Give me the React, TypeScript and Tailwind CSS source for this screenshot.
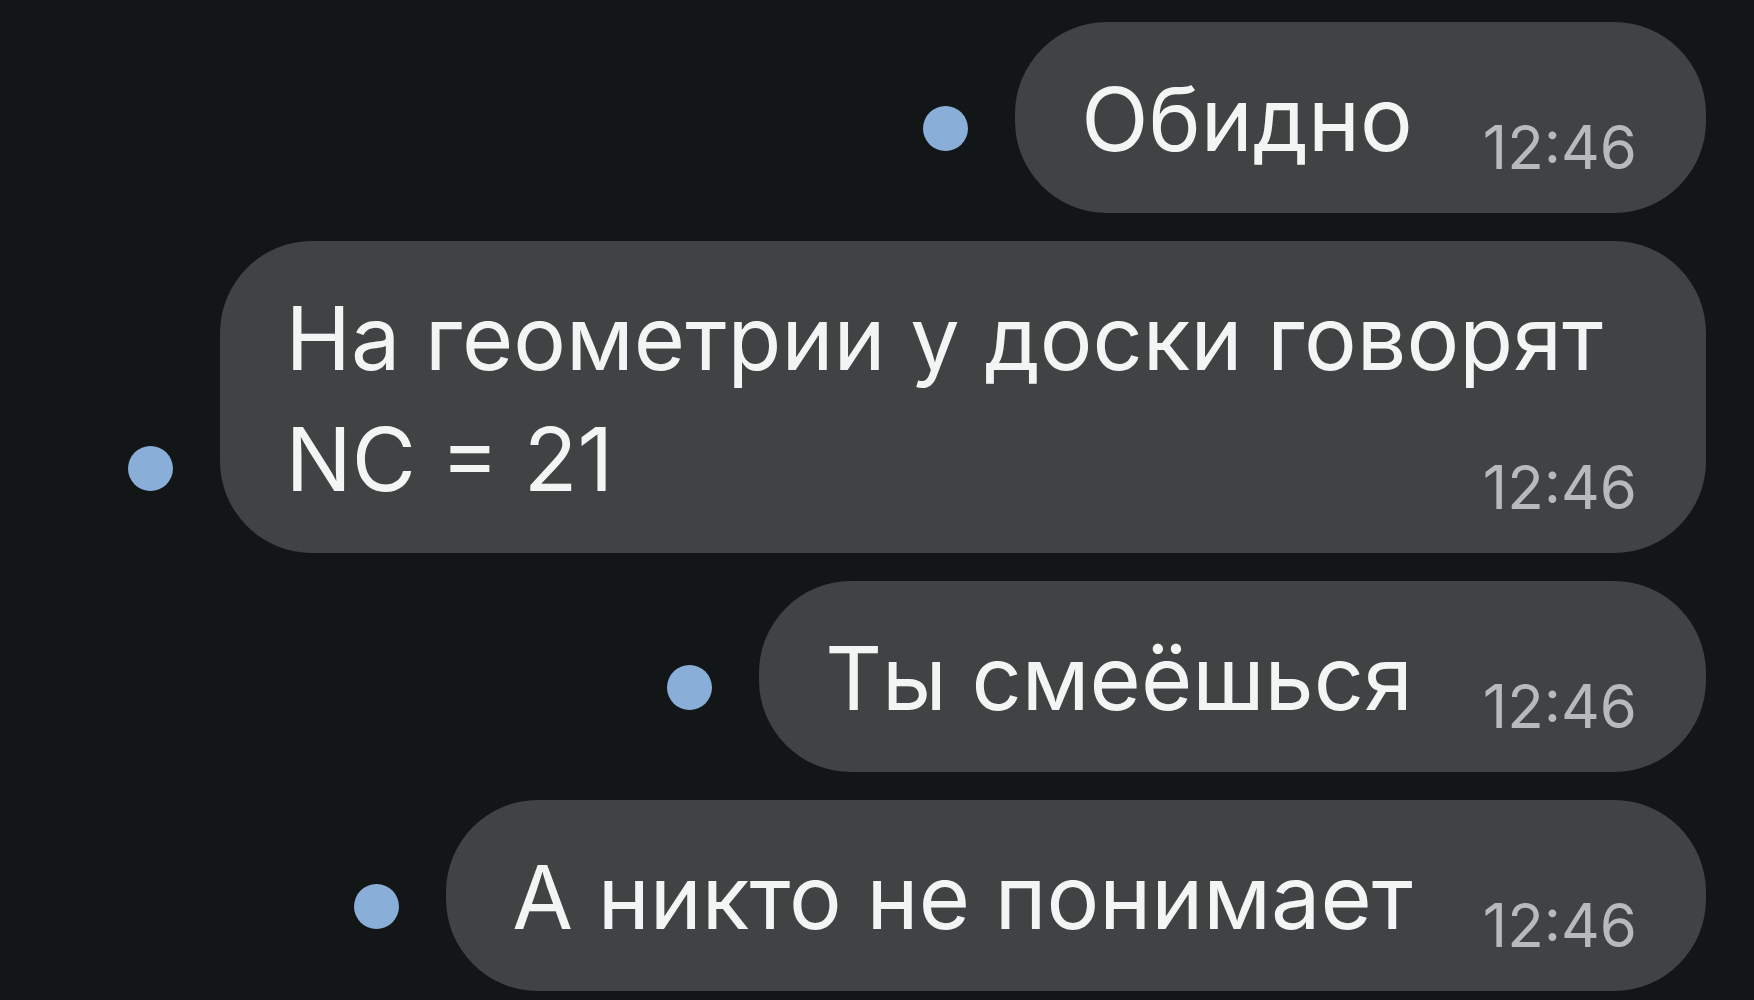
type Message = {
  lines: string[];
  time: string;
};

const messages: Message[] = [
  { lines: ['Обидно'], time: '12:46' },
  { lines: ['На геометрии у доски говорят', 'NC = 21'], time: '12:46' },
  { lines: ['Ты смеёшься'], time: '12:46' },
  { lines: ['А никто не понимает'], time: '12:46' },
];

const Bubble = ({ lines, time }: Message) => {
  const head = lines.slice(0, -1);
  const last = lines[lines.length - 1];

  return (
    <div className="flex items-end gap-[47px]">
      {/* unread marker */}
      <span className="mb-[62px] h-[45px] w-[45px] shrink-0 rounded-full bg-[#89afd9]" />
      <div className="rounded-[92px] bg-[#3f4343] pl-[66px] pr-[69px] pt-[37px] pb-[33px] text-[88px] leading-[121px] text-[#f3f4f4]">
        {head.map((line) => (
          <div key={line} className="whitespace-nowrap pr-[34px]">
            {line}
          </div>
        ))}
        <div className="flex items-end justify-between gap-[70px]">
          <span className="whitespace-nowrap">{last}</span>
          <span className="mb-[3px] text-[60px] leading-none text-[#b6baba]">{time}</span>
        </div>
      </div>
    </div>
  );
};

export default function App() {
  return (
    <div
      className="flex h-[1000px] w-full flex-col items-end gap-[28px] overflow-hidden bg-[#131617] pr-[48px] pt-[22px]"
      style={{ fontFamily: 'Inter, "Liberation Sans", sans-serif' }}
    >
      {messages.map((m, i) => (
        <Bubble key={i} {...m} />
      ))}
    </div>
  );
}
